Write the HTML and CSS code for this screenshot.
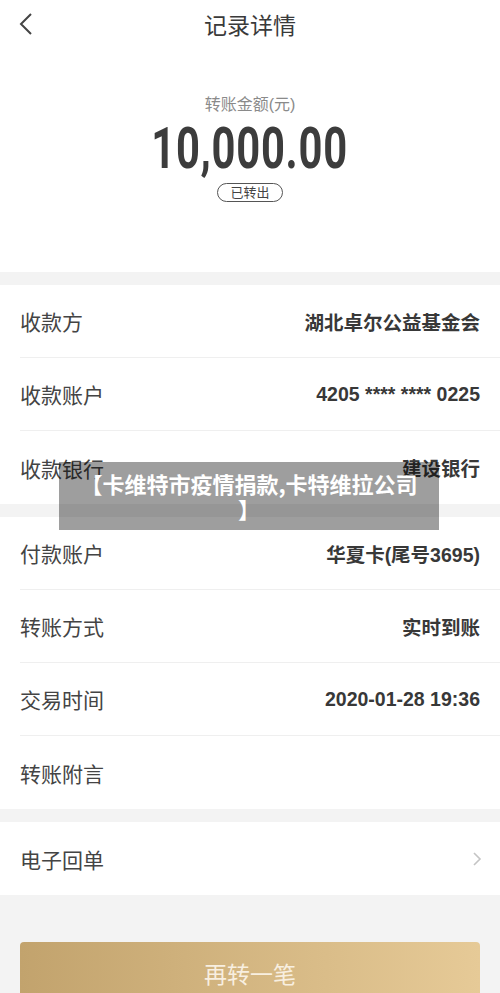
FILE: index.html
```html
<!DOCTYPE html>
<html lang="zh-CN">

<head>
    <meta charset="UTF-8">
    <meta name="viewport" content="width=device-width, initial-scale=1.0">
    <title>记录详情</title>
    <link rel="stylesheet" href="styles.css">
</head>

<body>
    <div class="page">
        <section class="summary">
            <header class="topbar">
                <svg class="back" width="16" height="24" viewBox="0 0 16 24">
                    <path d="M13 2 L3 12 L13 22" fill="none" stroke="#444" stroke-width="2" />
                </svg>
                <h1>记录详情</h1>
            </header>
            <div class="amount-label">转账金额(元)</div>
            <div class="amount"><span>10,000.00</span></div>
            <div class="status">已转出</div>
        </section>

        <section class="card">
            <div class="row"><span class="key">收款方</span><span class="val">湖北卓尔公益基金会</span></div>
            <div class="row"><span class="key">收款账户</span><span class="val">4205 **** **** 0225</span></div>
            <div class="row"><span class="key">收款银行</span><span class="val">建设银行</span></div>
        </section>

        <section class="card">
            <div class="row"><span class="key">付款账户</span><span class="val">华夏卡(尾号3695)</span></div>
            <div class="row"><span class="key">转账方式</span><span class="val">实时到账</span></div>
            <div class="row"><span class="key">交易时间</span><span class="val">2020-01-28 19:36</span></div>
            <div class="row"><span class="key">转账附言</span><span class="val"></span></div>
        </section>

        <section class="card">
            <div class="row">
                <span class="key">电子回单</span>
                <svg class="more" width="10" height="16" viewBox="0 0 10 16">
                    <path d="M2 2 L8 8 L2 14" fill="none" stroke="#c4c4c4" stroke-width="1.6" />
                </svg>
            </div>
        </section>

        <div class="actions">
            <button class="again">再转一笔</button>
        </div>

        <div class="caption">【卡维特市疫情捐款,卡特维拉公司】</div>
    </div>
</body>

</html>
```

FILE: styles.css
```css
body {
    margin: 0;
    background: #f3f3f3;
    font-family: "Liberation Sans", "Noto Sans CJK SC", sans-serif;
    color: #333;
}

.page {
    position: relative;
    width: 500px;
    height: 993px;
    overflow: hidden;
}

.summary {
    background: #fff;
    height: 272px;
    text-align: center;
}

.topbar {
    position: relative;
    height: 48px;
    display: flex;
    align-items: center;
    justify-content: center;
}

.topbar h1 {
    margin: 0;
    font-size: 23px;
    font-weight: normal;
    color: #3a3a3a;
}

.back {
    position: absolute;
    left: 18px;
    top: 12px;
}

.amount-label {
    margin-top: 46px;
    font-size: 16px;
    color: #8a8a8a;
    line-height: 22px;
}

.amount {
    height: 56px;
    line-height: 56px;
    margin-top: 4px;
}

.amount span {
    display: inline-block;
    font-family: Roboto, "Liberation Sans", sans-serif;
    font-size: 58px;
    font-weight: bold;
    color: #3c3c3c;
    transform: scaleX(0.72);
    letter-spacing: 1px;
}

.status {
    display: inline-block;
    margin-top: 7px;
    padding: 0 12px;
    height: 17px;
    line-height: 17px;
    border: 1.5px solid #555;
    border-radius: 10px;
    font-size: 13px;
    color: #444;
}

.card {
    background: #fff;
    margin-top: 13px;
    padding-left: 20px;
}

.row {
    display: flex;
    align-items: center;
    justify-content: space-between;
    height: 73px;
    padding-right: 20px;
    border-bottom: 1px solid #efefef;
    box-sizing: border-box;
}

.row:last-child {
    border-bottom: none;
}

.key {
    font-size: 21px;
    color: #444;
}

.val {
    font-size: 19.5px;
    font-weight: bold;
    color: #383838;
}

.more {
    margin-right: -2px;
}

.actions {
    padding: 47px 20px 0;
}

.again {
    display: block;
    width: 100%;
    height: 62px;
    border: none;
    border-radius: 4px;
    background: linear-gradient(to right, #c2a36d, #e6ca97);
    color: #f8efe0;
    font-family: "Noto Sans CJK SC", sans-serif;
    font-size: 23px;
}

.caption {
    position: absolute;
    left: 59px;
    top: 462px;
    width: 380px;
    height: 68px;
    padding: 9px 16px;
    box-sizing: border-box;
    background: rgba(0, 0, 0, 0.38);
    color: #fff;
    font-family: "Noto Sans CJK SC", sans-serif;
    font-weight: bold;
    font-size: 22px;
    line-height: 25px;
    text-align: center;
    line-break: anywhere;
}
```
